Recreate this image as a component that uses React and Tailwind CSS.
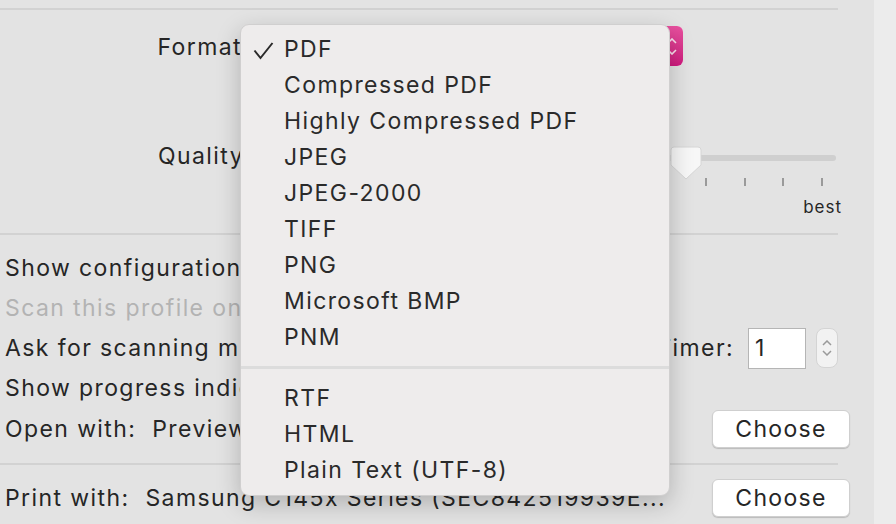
import React from "react";

const formats = [
  "PDF",
  "Compressed PDF",
  "Highly Compressed PDF",
  "JPEG",
  "JPEG-2000",
  "TIFF",
  "PNG",
  "Microsoft BMP",
  "PNM",
];
const textFormats = ["RTF", "HTML", "Plain Text (UTF-8)"];

const ChooseButton = () => (
  <button className="w-[138px] h-[38px] bg-white rounded-[6px] border border-[#cfcfcf] shadow-[0_1px_1px_rgba(0,0,0,0.18)] text-[23px] tracking-[1.3px] text-[#262626] leading-none">
    Choose
  </button>
);

const MenuItem = ({ label, checked }) => (
  <div className="relative h-[36px] flex items-center pl-[43px] text-[23px] tracking-[1.4px] text-[#2a2a2a]">
    {checked && (
      <svg className="absolute left-[12px] top-[11px]" width="22" height="18" viewBox="0 0 22 18">
        <path d="M1.5 8.5 L7.5 16 L19.5 1" fill="none" stroke="#2a2a2a" strokeWidth="2" />
      </svg>
    )}
    {label}
  </div>
);

const App = () => {
  return (
    <div
      className="relative w-[896px] h-[524px] overflow-hidden flex bg-[#ececec] text-[#262626] tracking-[1.4px]"
      style={{ fontFamily: "Inter, 'Noto Sans', sans-serif" }}
    >
      {/* MAIN PANEL */}
      <div className="w-[874px] h-full bg-[#e3e3e3] pr-[36px]">
        <div className="h-[10px] border-b-2 border-[#d2d2d2]" />

        {/* FORMAT / QUALITY */}
        <div className="h-[225px] border-b-2 border-[#d2d2d2] pt-[16px]">
          <div className="flex items-center h-[40px]">
            <div className="w-[240px] overflow-hidden flex justify-end text-[23px] pt-[3px]">
              <span className="whitespace-nowrap mr-[-10px]">Format:</span>
            </div>
            <div className="ml-[16px] w-[427px] h-[40px] bg-white rounded-[6px] flex justify-end">
              <div className="w-[22px] h-full rounded-r-[6px] bg-gradient-to-b from-[#e8509f] to-[#d0187f] flex flex-col items-center justify-center gap-[5px]">
                <svg width="10" height="6" viewBox="0 0 10 6">
                  <path d="M1 5 L5 1 L9 5" fill="none" stroke="#fbe3ef" strokeWidth="1.6" />
                </svg>
                <svg width="10" height="6" viewBox="0 0 10 6">
                  <path d="M1 1 L5 5 L9 1" fill="none" stroke="#fbe3ef" strokeWidth="1.6" />
                </svg>
              </div>
            </div>
          </div>

          <div className="flex items-center h-[40px] mt-[69px]">
            <div className="w-[240px] overflow-hidden flex justify-end text-[23px] pt-[3px]">
              <span className="whitespace-nowrap mr-[-12px]">Quality:</span>
            </div>
            <div className="ml-[16px] relative w-[580px] h-[40px]">
              <div className="absolute left-0 right-0 top-[20px] h-[6px] rounded-full bg-[#cfcfcf]" />
              <svg
                className="absolute left-[414px] top-[11px]"
                width="32"
                height="35"
                viewBox="0 0 32 35"
              >
                <path
                  d="M4 1 H28 Q31 1 31 4 V19 L16 33 L1 19 V4 Q1 1 4 1 Z"
                  fill="#f7f7f7"
                  stroke="#d6d6d6"
                  strokeWidth="1"
                />
              </svg>
            </div>
          </div>

          <div className="flex gap-[36.5px] ml-[705px] mt-[3px]">
            {[0, 1, 2, 3].map((i) => (
              <div key={i} className="w-[2px] h-[8px] bg-[#9a9a9a]" />
            ))}
          </div>

          <div className="text-right text-[17px] tracking-[1px] mt-[9px] mr-[-4px]">
            best
          </div>
        </div>

        {/* OPTIONS */}
        <div className="h-[230px] border-b-2 border-[#d2d2d2] pt-[13px] pl-[5px] text-[23px]">
          <div className="h-[40px] flex items-center">
            <span className="w-[235px] overflow-hidden whitespace-nowrap">Show configuration options</span>
          </div>
          <div className="h-[40px] flex items-center text-[#b3b3b3]">
            <span className="w-[235px] overflow-hidden whitespace-nowrap">Scan this profile on startup</span>
          </div>
          <div className="h-[40px] flex items-center justify-between">
            <span className="w-[235px] overflow-hidden whitespace-nowrap">Ask for scanning mode</span>
            <div className="flex items-center">
              <div className="w-[68px] overflow-hidden flex justify-end">
                <span className="whitespace-nowrap">Timer:</span>
              </div>
              <div className="ml-[14px] w-[58px] h-[41px] bg-white border border-[#b5b5b5] flex items-center pl-[6px]">
                1
              </div>
              <div className="ml-[10px] w-[22px] h-[40px] rounded-[8px] bg-[#f2f2f2] border border-[#d4d4d4] flex flex-col items-center justify-center gap-[4px]">
                <svg width="10" height="6" viewBox="0 0 10 6">
                  <path d="M1 5 L5 1 L9 5" fill="none" stroke="#9a9a9a" strokeWidth="1.5" />
                </svg>
                <svg width="10" height="6" viewBox="0 0 10 6">
                  <path d="M1 1 L5 5 L9 1" fill="none" stroke="#9a9a9a" strokeWidth="1.5" />
                </svg>
              </div>
            </div>
          </div>
          <div className="h-[40px] flex items-center">
            <span className="w-[235px] overflow-hidden whitespace-nowrap">Show progress indicator</span>
          </div>
          <div className="h-[40px] mt-[1px] flex items-center justify-between mr-[-12px]">
            <span className="w-[235px] overflow-hidden whitespace-nowrap">
              Open with:<span className="ml-[16px]">Preview</span>
            </span>
            <ChooseButton />
          </div>
        </div>

        {/* PRINT */}
        <div className="pt-[13px] pl-[5px] h-[40px] mr-[-12px] flex items-center justify-between text-[23px] box-content">
          <span className="whitespace-nowrap">
            Print with:<span className="ml-[16px]">Samsung C145x Series (SEC842519939E...</span>
          </span>
          <ChooseButton />
        </div>
      </div>

      {/* FORMAT MENU */}
      <div className="absolute left-[240px] top-[24px] w-[430px] h-[472px] rounded-[9px] bg-[#eeecec] border border-[#d0cfcf] shadow-[0_8px_24px_rgba(0,0,0,0.22)] pt-[6px]">
        {formats.map((f, i) => (
          <MenuItem key={f} label={f} checked={i === 0} />
        ))}
        <div className="h-[25px] flex items-center">
          <div className="w-full h-[3px] bg-[#dcdcdc]" />
        </div>
        {textFormats.map((f) => (
          <MenuItem key={f} label={f} />
        ))}
      </div>
    </div>
  );
};

export default App;
